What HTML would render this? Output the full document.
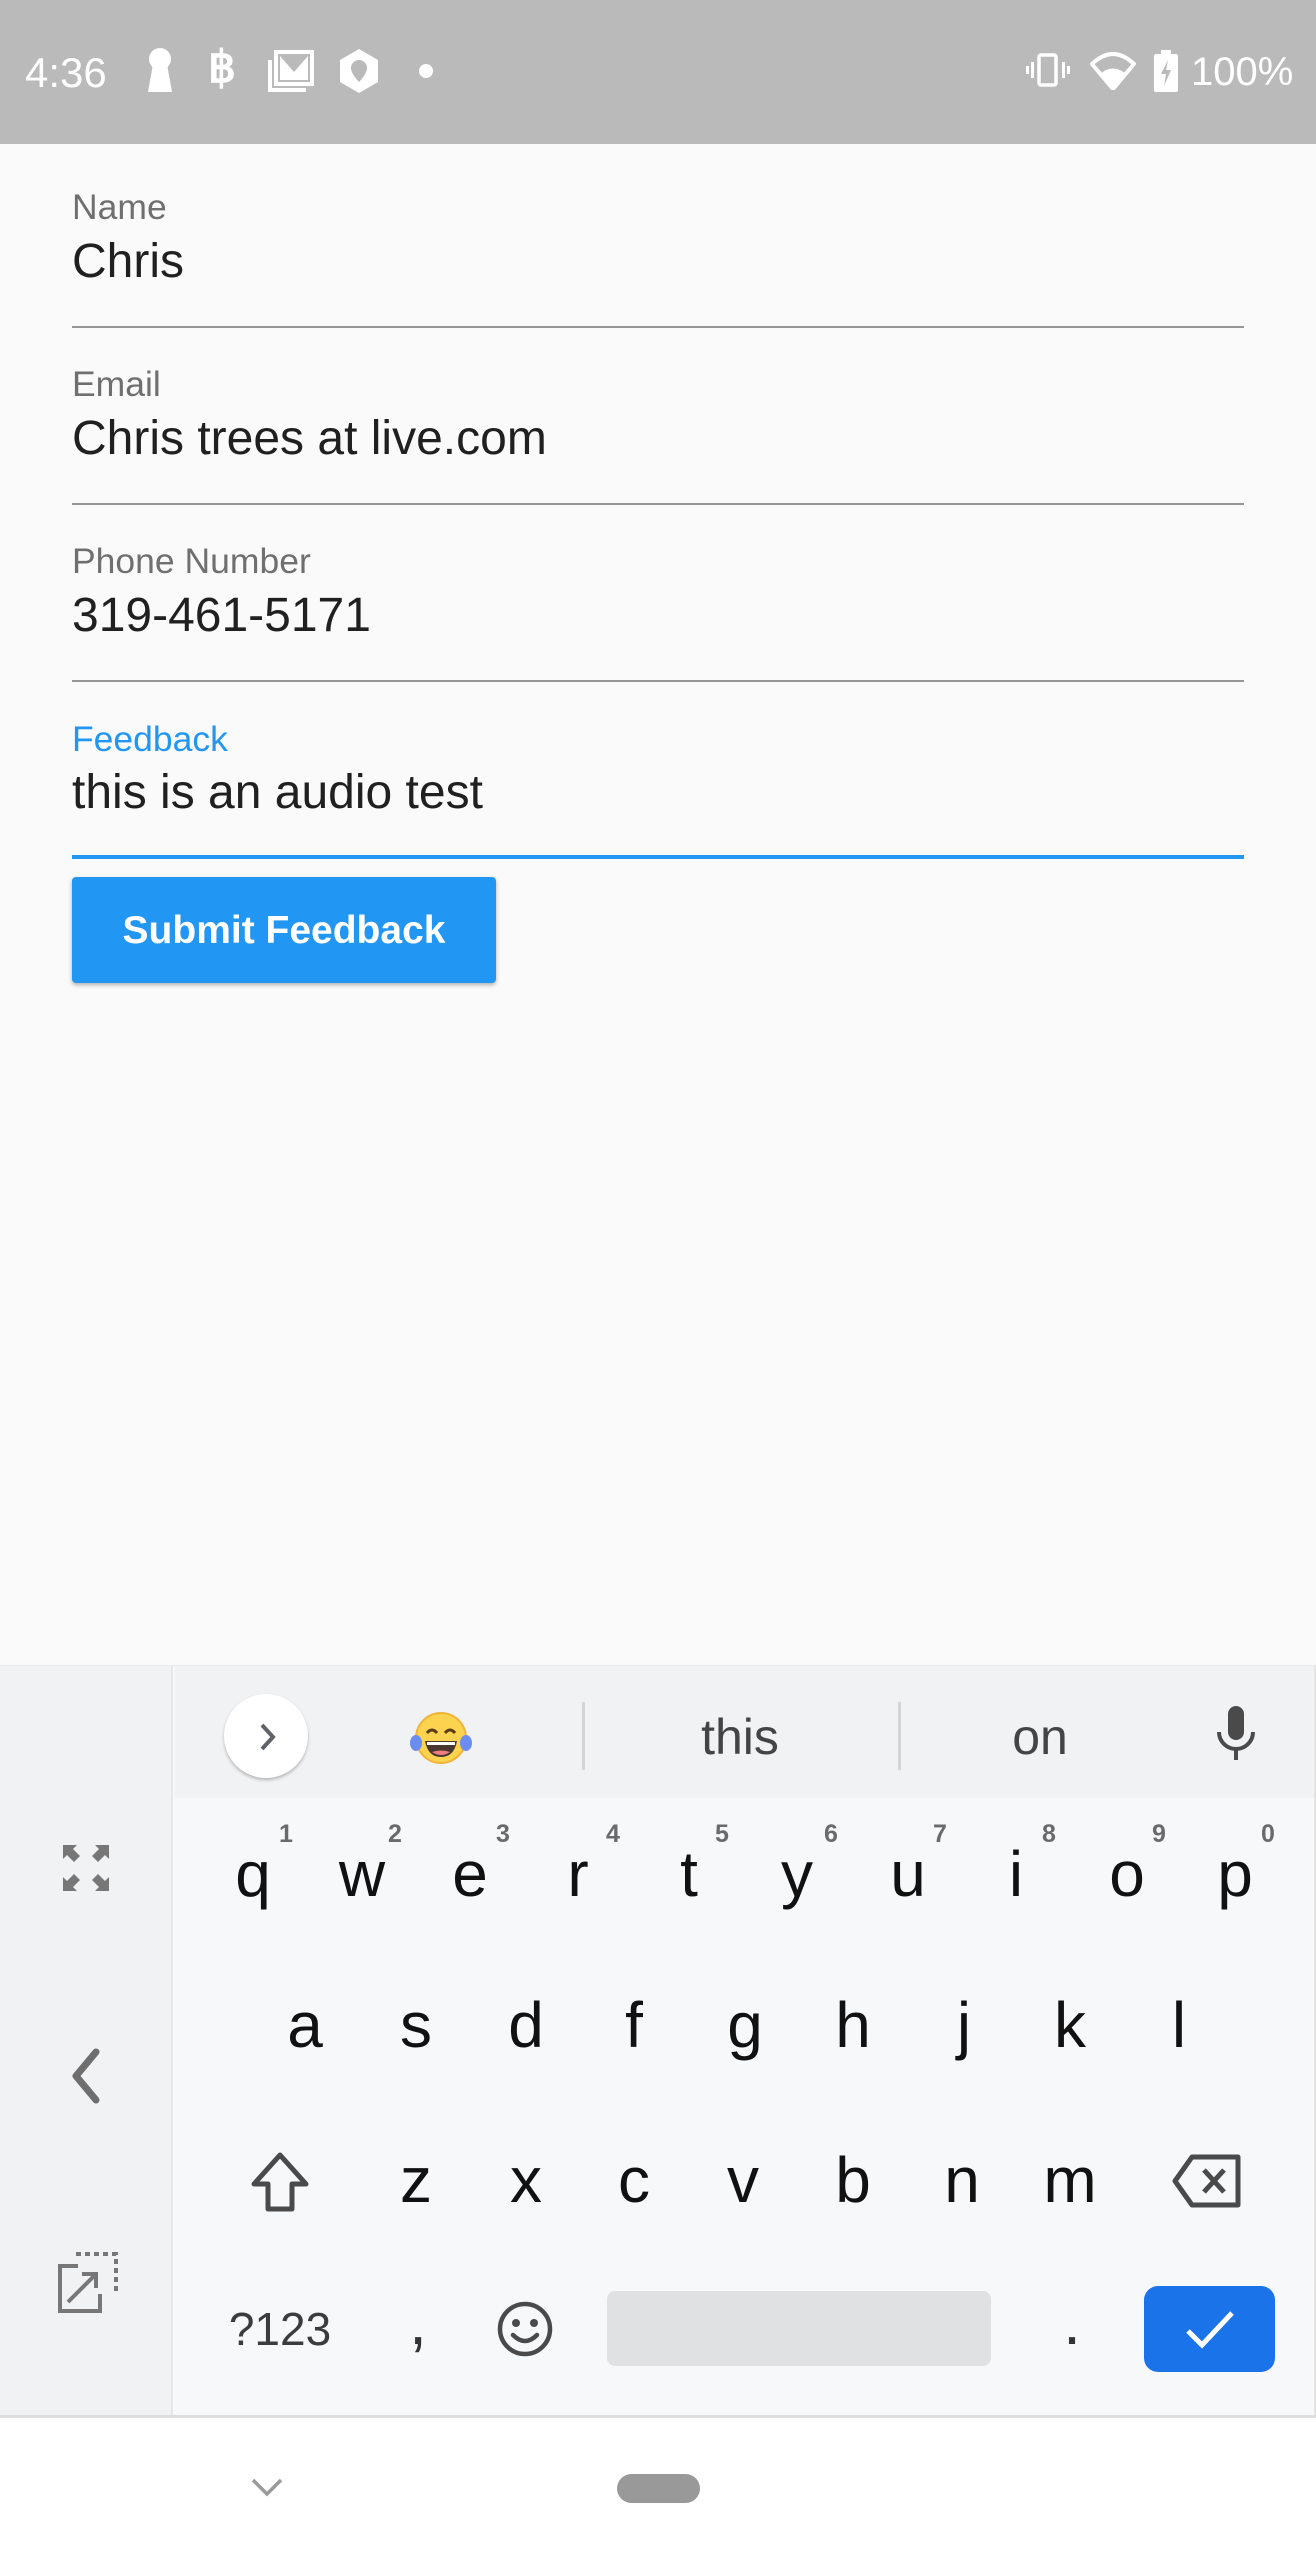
<!DOCTYPE html>
<html><head><meta charset="utf-8"><style>
*{margin:0;padding:0;box-sizing:border-box}
body{width:1316px;height:2560px;position:relative;overflow:hidden;background:#fafafa;font-family:"Liberation Sans",Roboto,sans-serif}
.a{position:absolute;line-height:1;white-space:nowrap}
.lbl{font-size:35.5px;color:#6f6f6f;left:72px}
.val{font-size:48px;color:#202020;left:72px}
.ln{position:absolute;left:72px;width:1172px;height:2px;background:#969696}
.k{position:absolute;font-size:64px;color:#111;line-height:1;width:80px;text-align:center}
.h{position:absolute;font-size:25px;color:#6a6a6a;font-weight:bold;line-height:1}
</style></head><body>
<!-- status bar -->
<div class="a" style="left:0;top:0;width:1316px;height:144px;background:#bababa"></div>
<div class="a" style="left:25px;top:52px;font-size:42px;color:#fff">4:36</div>
<svg class="a" style="left:140px;top:48px" width="40" height="48" viewBox="0 0 40 48"><circle cx="20" cy="11" r="11" fill="#fff"/><path d="M13 16 L27 16 L32 44 L8 44 Z" fill="#fff"/></svg>
<div class="a" style="left:208px;top:46px;font-size:44px;color:#fff;font-weight:bold">฿</div>
<svg class="a" style="left:268px;top:50px" width="48" height="42" viewBox="0 0 48 42"><path d="M8 2 H44 V34 H8 Z" fill="none" stroke="#fff" stroke-width="4"/><path d="M12 6 L26 22 L40 6 V30 H12 Z" fill="#fff"/><path d="M2 10 V40 H38" fill="none" stroke="#fff" stroke-width="4"/></svg>
<svg class="a" style="left:338px;top:48px" width="42" height="46" viewBox="0 0 42 46"><path d="M21 1 L40 12 V34 L21 45 L2 34 V12 Z" fill="#fff"/><path d="M21 12 a8 8 0 0 1 8 8 c0 6 -8 14 -8 14 s-8 -8 -8 -14 a8 8 0 0 1 8 -8z" fill="#bababa"/></svg>
<div class="a" style="left:419px;top:64px;width:14px;height:14px;border-radius:50%;background:#fff"></div>
<svg class="a" style="left:1026px;top:52px" width="44" height="36" viewBox="0 0 44 36"><rect x="13" y="3" width="17" height="30" rx="2" fill="none" stroke="#fff" stroke-width="3.5"/><rect x="5" y="10" width="3" height="16" fill="#fff"/><rect x="36" y="10" width="3" height="16" fill="#fff"/><rect x="0" y="14" width="3" height="8" fill="#fff"/><rect x="41" y="14" width="3" height="8" fill="#fff"/></svg>
<svg class="a" style="left:1090px;top:52px" width="46" height="38" viewBox="0 0 46 38"><path d="M2 12 Q23 -8 44 12 L23 37 Z" fill="none" stroke="#fff" stroke-width="4" stroke-linejoin="round"/><path d="M10 22 Q23 11 36 22 L23 37 Z" fill="#fff"/></svg>
<svg class="a" style="left:1154px;top:50px" width="24" height="42" viewBox="0 0 24 42"><rect x="7" y="0" width="10" height="5" fill="#fff"/><rect x="0" y="4" width="24" height="38" rx="2" fill="#fff"/><path d="M14 10 L7 24 H12 L10 36 L17 20 H12 Z" fill="#bababa"/></svg>
<div class="a" style="left:1191px;top:52px;font-size:40px;color:#fff">100%</div>

<!-- form -->
<div class="a lbl" style="top:190px">Name</div>
<div class="a val" style="top:238px">Chris</div>
<div class="ln" style="top:326px"></div>
<div class="a lbl" style="top:367px">Email</div>
<div class="a val" style="top:415px">Chris trees at live.com</div>
<div class="ln" style="top:503px"></div>
<div class="a lbl" style="top:544px">Phone Number</div>
<div class="a val" style="top:592px">319-461-5171</div>
<div class="ln" style="top:680px"></div>
<div class="a lbl" style="top:722px;color:#2196f3">Feedback</div>
<div class="a val" style="top:769px">this is an audio test</div>
<div class="ln" style="top:855px;height:4px;background:#2196f3"></div>
<div class="a" style="left:72px;top:877px;width:424px;height:106px;background:#2196f3;border-radius:4px;box-shadow:0 2px 4px rgba(0,0,0,.3)"></div>
<div class="a" style="left:72px;top:911px;width:424px;text-align:center;font-size:39px;font-weight:bold;color:#fff">Submit Feedback</div>

<!-- keyboard -->
<div class="a" style="left:0;top:1665px;width:1316px;height:752px;background:#f7f8fa;border-top:1px solid #eaeaea"></div>
<div class="a" style="left:0;top:1666px;width:173px;height:751px;background:#f1f2f4;border-right:2px solid #e6e7e9"></div>
<div class="a" style="left:175px;top:1666px;width:1139px;height:132px;background:#f1f2f4"></div>
<div class="a" style="left:1314px;top:1666px;width:2px;height:751px;background:#e4e4e4"></div>
<div class="a" style="left:0;top:2415px;width:1316px;height:3px;background:#dedede"></div>

<div class="a" style="left:224px;top:1694px;width:84px;height:84px;border-radius:50%;background:#fff;box-shadow:0 2px 3px rgba(0,0,0,.25)"></div>
<svg class="a" style="left:252px;top:1720px" width="30" height="34" viewBox="0 0 30 34"><path d="M10 5 L21 17 L10 29" fill="none" stroke="#5f6368" stroke-width="4"/></svg>
<svg class="a" style="left:410px;top:1711px" width="62" height="54" viewBox="0 0 62 54"><circle cx="31" cy="27" r="25" fill="#fbd34f" stroke="#f0b43a" stroke-width="2"/><path d="M17 22 q5 -6 10 0 M35 22 q5 -6 10 0" stroke="#5a3a1a" stroke-width="3" fill="none"/><path d="M15 30 H47 Q44 46 31 46 Q18 46 15 30Z" fill="#4a3630"/><path d="M22 41 Q31 47 40 41 Q31 38 22 41Z" fill="#ee7d7d"/><path d="M17 31 H45 V34 H17Z" fill="#fff"/><ellipse cx="6" cy="32" rx="6" ry="8" fill="#6b8cf0"/><ellipse cx="56" cy="32" rx="6" ry="8" fill="#6b8cf0"/></svg>
<div class="a" style="left:582px;top:1702px;width:3px;height:68px;background:#d4d5d7"></div>
<div class="a" style="left:898px;top:1702px;width:3px;height:68px;background:#d4d5d7"></div>
<div class="a" style="left:680px;top:1712px;width:120px;text-align:center;font-size:50px;color:#444">this</div>
<div class="a" style="left:980px;top:1712px;width:120px;text-align:center;font-size:50px;color:#444">on</div>
<svg class="a" style="left:1214px;top:1704px" width="44" height="58" viewBox="0 0 44 58"><rect x="14" y="2" width="16" height="34" rx="8" fill="#4a4a4a"/><path d="M5 28 a17 17 0 0 0 34 0" fill="none" stroke="#4a4a4a" stroke-width="4"/><rect x="20" y="44" width="4" height="12" fill="#4a4a4a"/></svg>

<!-- left icons -->
<svg class="a" style="left:60px;top:1842px" width="52" height="52" viewBox="0 0 52 52" fill="#777"><path d="M3 3 H17 L13 7 L20 14 L14 20 L7 13 L3 17Z"/><path d="M49 3 H35 L39 7 L32 14 L38 20 L45 13 L49 17Z"/><path d="M3 49 H17 L13 45 L20 38 L14 32 L7 39 L3 35Z"/><path d="M49 49 H35 L39 45 L32 38 L38 32 L45 39 L49 35Z"/></svg>
<svg class="a" style="left:66px;top:2046px" width="40" height="60" viewBox="0 0 40 60"><path d="M30 6 L10 30 L30 54" fill="none" stroke="#6e6e6e" stroke-width="7" stroke-linecap="round" stroke-linejoin="round"/></svg>
<svg class="a" style="left:56px;top:2252px" width="64" height="62" viewBox="0 0 64 62"><path d="M22 14 H4 V59 H44 V42" fill="none" stroke="#777" stroke-width="4"/><path d="M20 2 H60 V40" fill="none" stroke="#777" stroke-width="4" stroke-dasharray="5 4"/><path d="M12 50 L38 24 M26 22 H40 V36" fill="none" stroke="#777" stroke-width="4"/></svg>

<!-- row 1 -->
<div class="k" style="left:213px;top:1842px">q</div><div class="h" style="left:279px;top:1822px">1</div>
<div class="k" style="left:322px;top:1842px">w</div><div class="h" style="left:388px;top:1822px">2</div>
<div class="k" style="left:430px;top:1842px">e</div><div class="h" style="left:496px;top:1822px">3</div>
<div class="k" style="left:538px;top:1842px">r</div><div class="h" style="left:606px;top:1822px">4</div>
<div class="k" style="left:649px;top:1842px">t</div><div class="h" style="left:715px;top:1822px">5</div>
<div class="k" style="left:757px;top:1842px">y</div><div class="h" style="left:824px;top:1822px">6</div>
<div class="k" style="left:868px;top:1842px">u</div><div class="h" style="left:933px;top:1822px">7</div>
<div class="k" style="left:976px;top:1842px">i</div><div class="h" style="left:1042px;top:1822px">8</div>
<div class="k" style="left:1087px;top:1842px">o</div><div class="h" style="left:1152px;top:1822px">9</div>
<div class="k" style="left:1195px;top:1842px">p</div><div class="h" style="left:1261px;top:1822px">0</div>
<!-- row 2 -->
<div class="k" style="left:265px;top:1993px">a</div>
<div class="k" style="left:376px;top:1993px">s</div>
<div class="k" style="left:486px;top:1993px">d</div>
<div class="k" style="left:594px;top:1993px">f</div>
<div class="k" style="left:705px;top:1993px">g</div>
<div class="k" style="left:813px;top:1993px">h</div>
<div class="k" style="left:924px;top:1993px">j</div>
<div class="k" style="left:1030px;top:1993px">k</div>
<div class="k" style="left:1139px;top:1993px">l</div>
<!-- row 3 -->
<svg class="a" style="left:248px;top:2150px" width="64" height="64" viewBox="0 0 64 64"><path d="M32 5 L58 34 H44 V59 H20 V34 H6 Z" fill="none" stroke="#4a4a4a" stroke-width="5" stroke-linejoin="round"/></svg>
<div class="k" style="left:376px;top:2148px">z</div>
<div class="k" style="left:486px;top:2148px">x</div>
<div class="k" style="left:594px;top:2148px">c</div>
<div class="k" style="left:703px;top:2148px">v</div>
<div class="k" style="left:813px;top:2148px">b</div>
<div class="k" style="left:922px;top:2148px">n</div>
<div class="k" style="left:1030px;top:2148px">m</div>
<svg class="a" style="left:1172px;top:2154px" width="70" height="54" viewBox="0 0 70 54"><path d="M20 3 H66 V51 H20 L3 27 Z" fill="none" stroke="#4a4a4a" stroke-width="5" stroke-linejoin="round"/><path d="M32 16 L52 38 M52 16 L32 38" stroke="#4a4a4a" stroke-width="5"/></svg>
<!-- row 4 -->
<div class="a" style="left:220px;top:2306px;width:120px;text-align:center;font-size:46px;color:#3c3c3c">?123</div>
<div class="k" style="left:378px;top:2290px;color:#333">,</div>
<svg class="a" style="left:496px;top:2300px" width="58" height="58" viewBox="0 0 58 58"><circle cx="29" cy="29" r="25" fill="none" stroke="#4a4a4a" stroke-width="4.5"/><circle cx="20" cy="23" r="4" fill="#4a4a4a"/><circle cx="38" cy="23" r="4" fill="#4a4a4a"/><path d="M17 35 Q29 47 41 35" fill="none" stroke="#4a4a4a" stroke-width="4.5" stroke-linecap="round"/></svg>
<div class="a" style="left:607px;top:2291px;width:384px;height:75px;background:#e0e1e3;border-radius:8px"></div>
<div class="k" style="left:1032px;top:2290px;color:#333">.</div>
<div class="a" style="left:1144px;top:2286px;width:131px;height:86px;background:#1a73e8;border-radius:14px"></div>
<svg class="a" style="left:1184px;top:2307px" width="52" height="44" viewBox="0 0 52 44"><path d="M4 24 L18 38 L48 6" fill="none" stroke="#fff" stroke-width="5"/></svg>

<!-- nav bar -->
<div class="a" style="left:0;top:2418px;width:1316px;height:142px;background:#fff"></div>
<svg class="a" style="left:250px;top:2476px" width="34" height="22" viewBox="0 0 34 22"><path d="M3 4 L17 18 L31 4" fill="none" stroke="#9a9a9a" stroke-width="3.5"/></svg>
<div class="a" style="left:617px;top:2474px;width:83px;height:29px;border-radius:15px;background:#999"></div>
</body></html>
